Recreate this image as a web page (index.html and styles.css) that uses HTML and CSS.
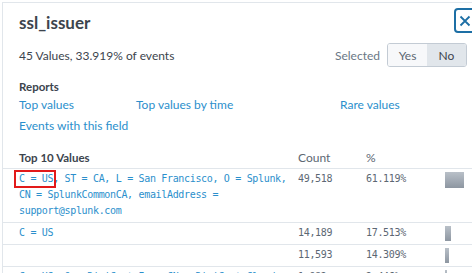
FILE: index.html
```html
<!DOCTYPE html>
<html>
<head>
<meta charset="utf-8">
<link rel="stylesheet" href="styles.css">
</head>
<body>
<div class="modal">
  <button class="close" aria-label="Close">
    <svg width="12" height="12" viewBox="0 0 12 12"><path d="M1.5 1.5 L10.5 10.5 M10.5 1.5 L1.5 10.5" stroke="#1d6fa5" stroke-width="1.8" fill="none"/></svg>
  </button>
  <div class="head">
    <h2 class="title">ssl_issuer</h2>
    <div class="summary">
      <span class="stats">45 Values, 33.919% of events</span>
      <div class="selected">
        <span class="sel-label">Selected</span>
        <div class="toggle">
          <span class="opt">Yes</span>
          <span class="opt on">No</span>
        </div>
      </div>
    </div>
    <div class="reports">
      <div class="rep-title">Reports</div>
      <div class="rep-links">
        <a class="lnk">Top values</a>
        <a class="lnk">Top values by time</a>
        <a class="lnk">Rare values</a>
        <a class="lnk">Events with this field</a>
      </div>
    </div>
  </div>
  <div class="table">
    <div class="row hdr">
      <div class="c-val">Top 10 Values</div>
      <div class="c-cnt">Count</div>
      <div class="c-pct">%</div>
      <div class="c-bar"></div>
    </div>
    <div class="row">
      <div class="c-val mono val">
        <span class="mark">C = US</span>, ST = CA, L = San Francisco, O = Splunk, CN = SplunkCommonCA, emailAddress = support@splunk.com
      </div>
      <div class="c-cnt mono">49,518</div>
      <div class="c-pct mono">61.119%</div>
      <div class="c-bar"><span class="bar big"></span></div>
    </div>
    <div class="row">
      <div class="c-val mono val">C = US</div>
      <div class="c-cnt mono">14,189</div>
      <div class="c-pct mono">17.513%</div>
      <div class="c-bar"><span class="bar" style="width:6px"></span></div>
    </div>
    <div class="row">
      <div class="c-val mono val"></div>
      <div class="c-cnt mono">11,593</div>
      <div class="c-pct mono">14.309%</div>
      <div class="c-bar"><span class="bar" style="width:4px"></span></div>
    </div>
    <div class="row">
      <div class="c-val mono val">C = US, O = DigiCert Inc, CN = DigiCert Cloud</div>
      <div class="c-cnt mono">1,982</div>
      <div class="c-pct mono">2.446%</div>
      <div class="c-bar"><span class="bar" style="width:2px"></span></div>
    </div>
  </div>
</div>
</body>
</html>
```
FILE: styles.css
```css
* { box-sizing: border-box; }
html, body { margin: 0; padding: 0; }
body {
  background: #fff;
  width: 472px;
  height: 273px;
  overflow: hidden;
  font-family: "Lato", "Open Sans", sans-serif;
  color: #3c444d;
}
.modal {
  position: relative;
  margin: 2px 0 0 2px;
  border-left: 1px solid #e1e6eb;
  border-top: 1px solid #e1e6eb;
  background: #fff;
  height: 300px;
}
.close {
  position: absolute;
  top: 5px;
  left: 451px;
  width: 26px;
  height: 25px;
  border: 2px solid #1d6fa5;
  border-radius: 4px;
  background: #fff;
  padding: 0 0 0 3px;
  display: flex;
  align-items: center;
  justify-content: flex-start;
}
.head { padding: 0 5px 0 16px; }
.title {
  margin: 0;
  padding-top: 10px;
  font-size: 17px;
  line-height: 20px;
  font-weight: 700;
  color: #3c444d;
}
.summary {
  display: flex;
  align-items: center;
  justify-content: space-between;
  margin-top: 10px;
  height: 24px;
}
.stats { font-size: 12px; }
.selected { display: flex; align-items: center; gap: 7px; }
.sel-label { font-size: 12px; color: #6b7785; }
.toggle {
  display: flex;
  border: 1px solid #c3cbd4;
  border-radius: 3px;
  overflow: hidden;
  height: 24px;
}
.opt {
  width: 39px;
  display: flex;
  align-items: center;
  justify-content: center;
  font-size: 12px;
  background: #f7f8fa;
  color: #5c6773;
}
.opt.on { background: #e1e6eb; color: #3c444d; }
.reports { margin-top: 12px; }
.rep-title { font-size: 11.5px; font-weight: 700; line-height: 16px; }
.rep-links {
  display: grid;
  grid-template-columns: 117px 204px 1fr;
  row-gap: 5px;
  margin-top: 2px;
}
.lnk { font-size: 12px; line-height: 16px; color: #2b8fcc; }
.table { margin-top: 14px; }
.row {
  display: grid;
  grid-template-columns: 295px 68px 79px 27px;
  border-bottom: 1px solid #e1e6eb;
  padding: 2px 0 3px;
}
.row.hdr { padding: 2px 0 2px; font-size: 12px; line-height: 16px; }
.hdr .c-val { font-weight: 700; font-size: 11.5px; }
.hdr .c-cnt, .hdr .c-pct { color: #5c6773; }
.c-val { padding-left: 16px; padding-right: 8px; }
.mono {
  font-family: "DejaVu Sans Mono", monospace;
  font-size: 10px;
  letter-spacing: -0.33px;
  line-height: 16px;
  color: #5c6773;
}
.val { color: #2b8fcc; position: relative; min-height: 16px; }
.mark { position: relative; }
.mark::after {
  content: "";
  position: absolute;
  left: -5px;
  top: -3px;
  right: -3px;
  bottom: -4px;
  border: 2px solid #e21a1a;
}
.c-bar { padding-top: 1px; }
.bar {
  display: block;
  height: 15px;
  background: linear-gradient(#b9c0c8, #8d96a1);
}
.bar.big { width: 19px; height: 16px; }
```
